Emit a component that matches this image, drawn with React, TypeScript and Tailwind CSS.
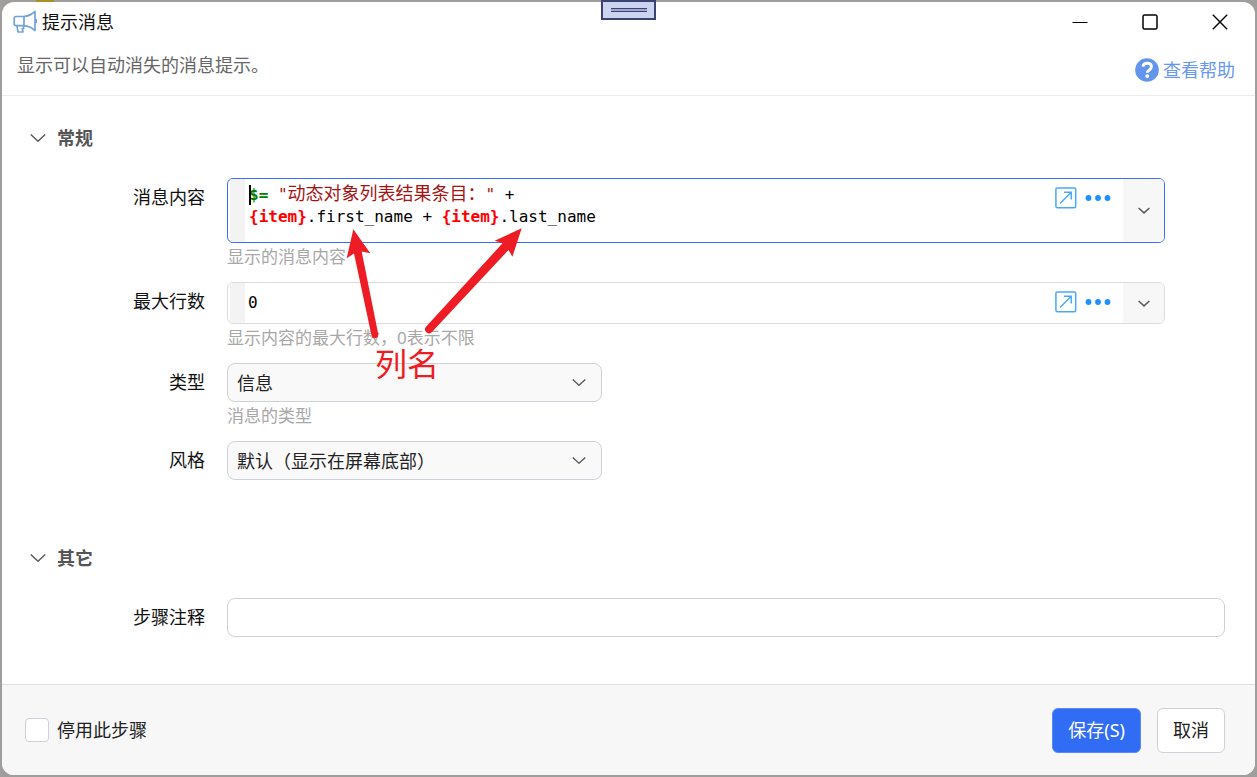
import { useState, type ReactNode } from "react";

function Chevron({ className, strokeWidth = 1.4 }: { className: string; strokeWidth?: number }) {
  return (
    <svg viewBox="0 0 16 8" fill="none" stroke="currentColor" strokeWidth={strokeWidth} className={className} aria-hidden="true">
      <path d="M0.8 0.6 8 7.2 15.2 0.6" />
    </svg>
  );
}

function Megaphone() {
  return (
    <svg viewBox="0 0 24 24" width="24" height="24" fill="none" stroke="#74a3d6" strokeWidth="1.7" strokeLinejoin="round" strokeLinecap="round" aria-hidden="true">
      <path d="M3 6.500H11V15.600H3Q1.200 15.600 1.200 13.800V8.300Q1.200 6.500 3 6.500Z" />
      <path d="M11 6.500Q17 6 22 1.500V20.500Q17 16 11 15.600" />
      <path d="M4 15.800 5 22H10L9.200 18.500H10.600V15.800" />
      <path d="M23.200 9.500V12.500" />
    </svg>
  );
}

function ExpandIcon() {
  return (
    <svg viewBox="0 0 22 22" width="22" height="22" fill="none" stroke="#4aa8fb" strokeWidth="1.500" aria-hidden="true">
      <rect x="0.900" y="0.900" width="19.800" height="19.800" rx="1.500" />
      <path d="M5 16.500 16 5.500M9 5.200H16.300V12.500" />
    </svg>
  );
}

function DotsIcon() {
  return (
    <svg viewBox="0 0 26 8" width="26" height="8" fill="#1b90ff" aria-hidden="true">
      <circle cx="3.500" cy="4" r="2.900" />
      <circle cx="13" cy="4" r="2.900" />
      <circle cx="22.500" cy="4" r="2.900" />
    </svg>
  );
}

function Section({ title, children }: { title: string; children: ReactNode }) {
  const [open, setOpen] = useState(true);
  return (
    <section>
      <h2>
        <button type="button" aria-expanded={open} onClick={() => setOpen(!open)} className="flex h-7 items-center gap-[11px] pl-7 text-lg font-bold text-[#555]">
          <Chevron className={open ? "h-2 w-4" : "h-2 w-4 -rotate-90"} />
          {title}
        </button>
      </h2>
      {open && <div className="mt-[26px] flex flex-col gap-[11px]">{children}</div>}
    </section>
  );
}

function Row({ label, id, hint, children }: { label: string; id: string; hint?: string; children: ReactNode }) {
  return (
    <div className="flex gap-[22px]">
      <label id={id + "-label"} htmlFor={id} className="w-[203px] shrink-0 text-right leading-[38px]">
        {label}
      </label>
      <div className="min-w-0 flex-1">
        {children}
        {hint && <p className="text-[17px] leading-7 text-[#a8a8a8]">{hint}</p>}
      </div>
    </div>
  );
}

function EditorFrame({ focused, children }: { focused?: boolean; children: ReactNode }) {
  return (
    <div
      className={
        focused
          ? "mr-[60px] flex h-[65px] overflow-hidden rounded-md border border-[#3a70f2] bg-white pl-[2px]"
          : "mr-[60px] flex h-[42px] overflow-hidden rounded-md border border-[#dcdcdc] bg-white pl-[2px]"
      }
    >
      <div className="w-[15px] shrink-0 bg-[#f3f3f3]" />
      {children}
      <div className="flex h-[38px] shrink-0 items-center gap-2 pr-3">
        <button type="button" aria-label="展开编辑">
          <ExpandIcon />
        </button>
        <button type="button" aria-label="更多">
          <DotsIcon />
        </button>
      </div>
      <button type="button" aria-label="选择" className="flex w-[41px] shrink-0 items-center justify-center bg-[#f7f7f7] text-[#5c5c5c]">
        <Chevron className="h-[7px] w-3" strokeWidth={2} />
      </button>
    </div>
  );
}

function Select({ id, options }: { id: string; options: string[] }) {
  return (
    <div className="relative w-[375px] max-w-full">
      <select id={id} className="block h-[39px] w-full appearance-none rounded-lg border border-[#cdd2d9] bg-[#f9f9fa] pl-[9px] pr-10 text-[#222]">
        {options.map((o) => (
          <option key={o}>{o}</option>
        ))}
      </select>
      <Chevron className="pointer-events-none absolute top-4 right-4 h-[7px] w-[14px] text-[#555]" />
    </div>
  );
}

const mono = "font-['DejaVu_Sans_Mono','Noto_Sans_CJK_SC',monospace]";

function Token({ children }: { children: string }) {
  return <span className="font-bold text-[#ff0000]">{children}</span>;
}

export default function App() {
  return (
    <div className="relative flex min-h-screen flex-col bg-[#a09e9d] p-[2px] font-['Noto_Sans','Noto_Sans_CJK_SC',sans-serif] text-lg text-[#111]">
      <div className="absolute top-0 left-9 h-[2px] w-[18px] bg-[#a98f28]" />
      <div className="flex flex-1 flex-col overflow-hidden rounded-xl bg-white">
        <header className="border-b border-[#ececec]">
          <div className="flex h-10 items-center">
            <h1 className="flex flex-1 items-center gap-[5px] pl-[11px]">
              <Megaphone />
              提示消息
            </h1>
            <button type="button" aria-label="最小化" className="flex h-10 w-[70px] items-center justify-center">
              <svg width="16" height="16" stroke="#000" strokeWidth="1.200" aria-hidden="true">
                <path d="M0.500 8.500H15.500" />
              </svg>
            </button>
            <button type="button" aria-label="最大化" className="flex h-10 w-[70px] items-center justify-center">
              <svg width="16" height="16" fill="none" stroke="#000" strokeWidth="1.500" aria-hidden="true">
                <rect x="1" y="1" width="14" height="14" rx="1.500" />
              </svg>
            </button>
            <button type="button" aria-label="关闭" className="flex h-10 w-[70px] items-center justify-center">
              <svg width="16" height="16" stroke="#000" strokeWidth="1.400" aria-hidden="true">
                <path d="M0.800 0.800 15.200 15.200M15.200 0.800 0.800 15.200" />
              </svg>
            </button>
          </div>
          <div className="flex h-[53px] items-start justify-between pr-5 pl-[15px]">
            <p className="mt-[11px] leading-6 text-[#666]">显示可以自动消失的消息提示。</p>
            <a href="#help" className="mt-4 flex h-6 items-center gap-1 text-[#6797ee]">
              <svg viewBox="0 0 512 512" width="24" height="24" fill="#6495ed" aria-hidden="true">
                <circle cx="256" cy="256" r="252" />
                <path d="M166 184C180 130 214 112 258 112C314 112 350 144 350 188C350 230 320 246 296 264C274 280 264 288 264 312" fill="none" stroke="#fff" strokeWidth="62" />
                <circle cx="262" cy="386" r="42" fill="#fff" />
              </svg>
              查看帮助
            </a>
          </div>
        </header>

        <main className="relative flex flex-1 flex-col gap-16 pt-7 pr-[30px] pb-[46px]">
          <Section title="常规">
            <Row label="消息内容" id="content" hint="显示的消息内容">
              <EditorFrame focused>
                <div
                  id="content"
                  role="textbox"
                  aria-multiline="true"
                  aria-labelledby="content-label"
                  contentEditable
                  suppressContentEditableWarning
                  className={mono + " min-w-0 flex-1 pt-1 pl-1 text-base leading-[22px] text-black outline-none"}
                >
                  <div>
                    <span className="font-bold text-[#008000]">$=</span>{" "}
                    <span className="text-[#a31515]">
                      "<span className="text-lg leading-[22px]">动态对象列表结果条目：</span>"
                    </span>{" "}
                    +
                  </div>
                  <div>
                    <Token>{"{item}"}</Token>.first_name + <Token>{"{item}"}</Token>.last_name
                  </div>
                </div>
              </EditorFrame>
            </Row>
            <Row label="最大行数" id="lines" hint="显示内容的最大行数，0表示不限">
              <EditorFrame>
                <input id="lines" defaultValue="0" className={mono + " min-w-0 flex-1 pl-[3px] text-base text-black outline-none"} />
              </EditorFrame>
            </Row>
            <Row label="类型" id="kind" hint="消息的类型">
              <Select id="kind" options={["信息"]} />
            </Row>
            <Row label="风格" id="style">
              <Select id="style" options={["默认（显示在屏幕底部）"]} />
            </Row>
          </Section>

          <Section title="其它">
            <Row label="步骤注释" id="note">
              <input id="note" className="block h-[39px] w-full rounded-lg border border-[#cdd2d9] bg-white px-2" />
            </Row>
          </Section>

          <div className="pointer-events-none absolute top-[89px] left-[247px] h-5 w-[2px] bg-black" />
          <svg className="pointer-events-none absolute top-[129px] left-[338px]" width="190" height="116" viewBox="340 225 190 116" fill="#ee1c24" aria-hidden="true">
            <path d="M353.300 229.300 370.300 253.300 361.700 251.500 378.200 334A3.400 3.400 0 0 1 371.500 335.500L354 253.500 346.700 258.300Z" />
            <path d="M521.700 228.300 512.400 256.700 508.500 250 432.200 331.800A3.600 3.600 0 0 1 426 326.800L502.500 243.300 494.700 240.700Z" />
          </svg>
          <span className="pointer-events-none absolute top-[248px] left-[373px] text-[32px] leading-10 text-[#ee1c24]">列名</span>
        </main>

        <footer className="flex h-[91px] items-center border-t border-[#dedede] bg-[#f7f7f7] pr-[30px] pl-[23px]">
          <label className="flex flex-1 items-center gap-2 text-[#222]">
            <input type="checkbox" className="size-6 appearance-none rounded border border-[#cdd2d9] bg-white checked:bg-[#316cf4]" />
            停用此步骤
          </label>
          <div className="flex gap-4">
            <button type="button" className="h-[45px] rounded-md border border-[#5b8af5] bg-[#316cf4] px-[15px] text-white">
              保存(S)
            </button>
            <button type="button" className="h-[45px] rounded-md border border-[#cdd2d9] bg-white px-[15px] text-[#222]">
              取消
            </button>
          </div>
        </footer>
      </div>

      <div className="absolute top-0 left-[601px] flex h-5 w-[55px] items-center justify-center border-2 border-[#3b4470] bg-[#ccd5f0]">
        <div className="h-1 w-9 border-y border-[#3b4470] bg-[#a5a5cf]" />
      </div>
    </div>
  );
}
